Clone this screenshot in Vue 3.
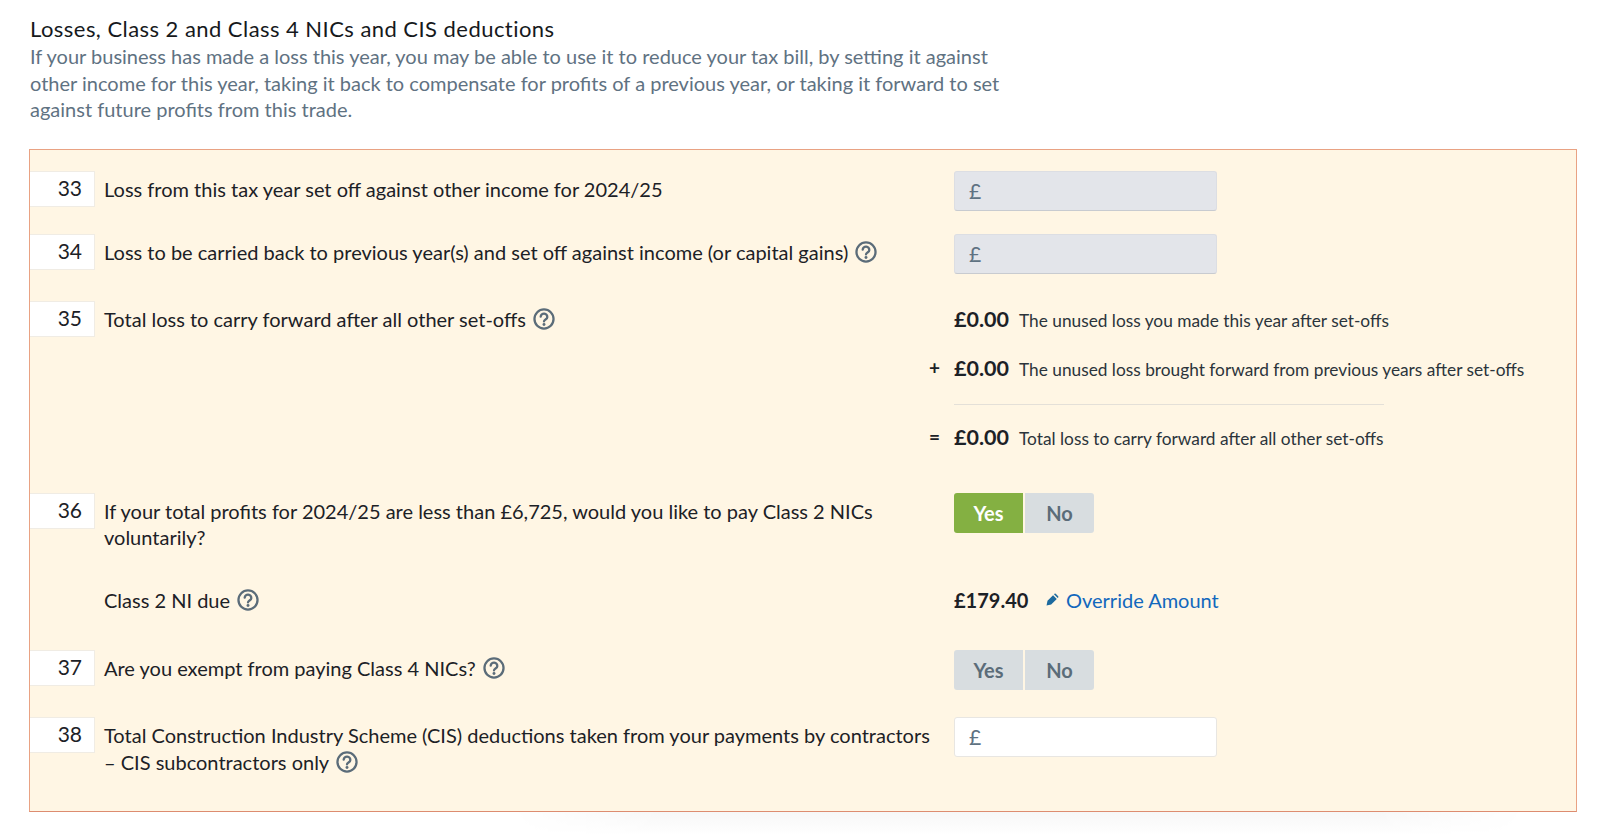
<script setup>
const helpPath = 'M8.4 9.4a3.6 3.6 0 0 1 7.2.6c0 2.4-3.6 2.6-3.6 4.6'
</script>

<template>
  <div class="page">
    <div class="intro">
      <h2 class="intro_title">Losses, Class 2 and Class 4 NICs and CIS deductions</h2>
      <p class="intro_text">If your business has made a loss this year, you may be able to use it to reduce your tax bill, by setting it against other income for this year, taking it back to compensate for profits of a previous year, or taking it forward to set against future profits from this trade.</p>
    </div>

    <div class="panel">
      <div class="row">
        <div class="num">33</div>
        <div class="label">Loss from this tax year set off against other income for 2024/25</div>
        <div class="control"><div class="money disabled">£</div></div>
      </div>

      <div class="row row_34">
        <div class="num">34</div>
        <div class="label">Loss to be carried back to previous year(s) and set off against income (or capital gains)
          <svg class="help" viewBox="0 0 24 24"><circle cx="12" cy="12" r="10.4" /><path :d="helpPath" /><circle class="dot" cx="12" cy="18" r="1.6" /></svg>
        </div>
        <div class="control"><div class="money disabled">£</div></div>
      </div>

      <div class="row row_35">
        <div class="num">35</div>
        <div class="label">Total loss to carry forward after all other set-offs
          <svg class="help" viewBox="0 0 24 24"><circle cx="12" cy="12" r="10.4" /><path :d="helpPath" /><circle class="dot" cx="12" cy="18" r="1.6" /></svg>
        </div>
        <div class="control sums">
          <div class="sum">
            <b class="amount">£0.00</b>
            <span class="desc">The unused loss you made this year after set-offs</span>
          </div>
          <div class="sum">
            <span class="sign">+</span>
            <b class="amount">£0.00</b>
            <span class="desc">The unused loss brought forward from previous years after set-offs</span>
          </div>
          <div class="rule"></div>
          <div class="sum">
            <span class="sign">=</span>
            <b class="amount">£0.00</b>
            <span class="desc">Total loss to carry forward after all other set-offs</span>
          </div>
        </div>
      </div>

      <div class="row row_36">
        <div class="num">36</div>
        <div class="label">If your total profits for 2024/25 are less than £6,725, would you like to pay Class 2 NICs voluntarily?</div>
        <div class="control">
          <div class="toggle">
            <button class="active" type="button">Yes</button>
            <button type="button">No</button>
          </div>
        </div>
      </div>

      <div class="row row_due">
        <div></div>
        <div class="label">Class 2 NI due
          <svg class="help" viewBox="0 0 24 24"><circle cx="12" cy="12" r="10.4" /><path :d="helpPath" /><circle class="dot" cx="12" cy="18" r="1.6" /></svg>
        </div>
        <div class="control due">
          <b class="due_amount">£179.40</b>
          <svg class="pencil" viewBox="0 0 14 14"><path d="M.6 13.4l1-5 6-6 4 4-6 6zM8.6 1.4l.5-.5a1 1 0 0 1 1.4 0l2.6 2.6a1 1 0 0 1 0 1.4l-.5.5z" /></svg>
          <a class="override">Override Amount</a>
        </div>
      </div>

      <div class="row row_37">
        <div class="num">37</div>
        <div class="label">Are you exempt from paying Class 4 NICs?
          <svg class="help" viewBox="0 0 24 24"><circle cx="12" cy="12" r="10.4" /><path :d="helpPath" /><circle class="dot" cx="12" cy="18" r="1.6" /></svg>
        </div>
        <div class="control">
          <div class="toggle">
            <button type="button">Yes</button>
            <button type="button">No</button>
          </div>
        </div>
      </div>

      <div class="row row_38">
        <div class="num">38</div>
        <div class="label">Total Construction Industry Scheme (CIS) deductions taken from your payments by contractors – CIS subcontractors only
          <svg class="help" viewBox="0 0 24 24"><circle cx="12" cy="12" r="10.4" /><path :d="helpPath" /><circle class="dot" cx="12" cy="18" r="1.6" /></svg>
        </div>
        <div class="control"><div class="money">£</div></div>
      </div>
    </div>
    <div class="fade"></div>
  </div>
</template>

<style>
body {
  background: #fff;
}
</style>

<style scoped>
.page {
  width: 1600px;
  height: 834px;
  overflow: hidden;
  padding: 14px 23px 0 30px;
  box-sizing: border-box;
  font-family: Lato, "Noto Sans", sans-serif;
  color: #1c2126;
}
.intro_title {
  margin: 0;
  font-size: 22px;
  line-height: 29px;
  letter-spacing: 0.45px;
  font-weight: 400;
  color: #16191c;
}
.intro_text {
  margin: 0;
  width: 985px;
  font-size: 20px;
  line-height: 26.5px;
  color: #5f7282;
}
.panel {
  margin-top: 26px;
  margin-left: -1px;
  height: 663px;
  box-sizing: border-box;
  padding-top: 21px;
  background: #fff6e4;
  border: 1px solid #e9a283;
  border-bottom-color: #dd8c70;
}
.row {
  display: grid;
  grid-template-columns: 65px 859px 1fr;
  margin-bottom: 23px;
  font-size: 20px;
  line-height: 26.5px;
}
.num {
  height: 36px;
  box-sizing: border-box;
  padding-right: 12px;
  background: #fff;
  border: 1px solid #f0ece4;
  border-left: none;
  text-align: right;
  font-size: 21px;
  line-height: 32px;
}
.label {
  padding: 5px 18px 0 9px;
}
.help {
  width: 22px;
  height: 22px;
  margin-left: 2px;
  vertical-align: -3px;
  fill: none;
  stroke: #5b6c79;
  stroke-width: 2.5;
  stroke-linecap: round;
}
.help .dot {
  fill: #5b6c79;
  stroke: none;
}
.money {
  width: 263px;
  height: 40px;
  box-sizing: border-box;
  padding-left: 14px;
  border: 1px solid #e8e6e2;
  border-radius: 3px;
  background: #fff;
  color: #5f7282;
  font-size: 21px;
  line-height: 38px;
}
.money.disabled {
  background: #e3e5ea;
  border-color: #dcdee3;
  border-bottom-color: #c8cbd0;
}
.row_34 {
  margin-bottom: 27px;
}
.row_35 {
  margin-bottom: 42px;
}
.sums {
  padding-top: 5px;
}
.sum {
  position: relative;
  display: flex;
  align-items: baseline;
  height: 27px;
  margin-bottom: 22px;
}
.sum:last-child {
  margin-bottom: 0;
}
.sign {
  position: absolute;
  left: -25px;
  font-size: 19px;
  font-weight: 700;
}
.amount {
  width: 65px;
  font-size: 21.5px;
  font-weight: 700;
}
.desc {
  font-size: 17.3px;
  color: #2b343b;
}
.rule {
  width: 430px;
  height: 1px;
  margin: 0 0 19px;
  background: #e4e0d8;
}
.row_36 {
  margin-bottom: 31px;
}
.row_due {
  margin-bottom: 37px;
}
.row_37 {
  margin-bottom: 27px;
}
.toggle {
  display: flex;
  gap: 2px;
  width: 140px;
}
.toggle button {
  width: 69px;
  height: 40px;
  padding: 0;
  border: none;
  background: #d8dde0;
  color: #5b6c79;
  font-family: inherit;
  font-size: 20px;
  font-weight: 700;
}
.toggle button:first-child {
  border-radius: 3px 0 0 3px;
}
.toggle button:last-child {
  border-radius: 0 3px 3px 0;
}
.toggle button.active {
  background: #84b042;
  color: #fff;
}
.due {
  display: flex;
  align-items: baseline;
  padding-top: 5px;
}
.due_amount {
  width: 92px;
  font-size: 20px;
  font-weight: 700;
}
.pencil {
  width: 13px;
  height: 13px;
  margin-right: 7px;
  fill: #1c6a9e;
  align-self: center;
}
.override {
  font-size: 20px;
  color: #1268bd;
}
.fade {
  height: 24px;
  margin-left: 480px;
  margin-right: 50px;
  background: linear-gradient(#f7f7f7, #fff);
  -webkit-mask-image: linear-gradient(90deg, transparent, #000 15%, #000 85%, transparent);
  mask-image: linear-gradient(90deg, transparent, #000 15%, #000 85%, transparent);
}
</style>
